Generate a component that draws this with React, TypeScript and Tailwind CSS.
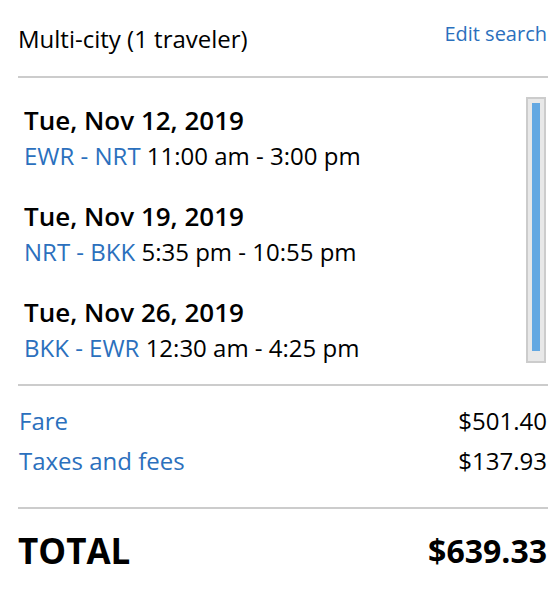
import React from "react";

const trips = [
  { date: "Tue, Nov 12, 2019", route: "EWR - NRT", time: "11:00 am - 3:00 pm" },
  { date: "Tue, Nov 19, 2019", route: "NRT - BKK", time: "5:35 pm - 10:55 pm" },
  { date: "Tue, Nov 26, 2019", route: "BKK - EWR", time: "12:30 am - 4:25 pm" },
];

export default function App() {
  return (
    <div
      className="w-[560px] h-[596px] bg-white text-black pl-[18px] pr-[12px]"
      style={{ fontFamily: '"Open Sans", "Liberation Sans", sans-serif' }}
    >
      <div className="flex justify-between items-start pt-[22px] h-[76px]">
        <div className="text-[24px] leading-[34px]">Multi-city (1 traveler)</div>
        <a className="text-[20px] leading-[28px] text-[#2b70bd] mt-[-2px] mr-[1px]">Edit search</a>
      </div>
      <div className="h-[2px] bg-[#cccccc]" />
      <div className="flex justify-between pt-[19px] h-[306px]">
        <div className="pl-[6px] flex flex-col gap-[24px] pt-[5px]">
          {trips.map((t) => (
            <div key={t.date} className="flex flex-col">
              <div className="text-[26px] font-semibold leading-[36px]">{t.date}</div>
              <div className="text-[24px] leading-[36px]">
                <span className="text-[#2b70bd]">{t.route}</span> {t.time}
              </div>
            </div>
          ))}
        </div>
        <div className="w-[20px] h-[266px] bg-[#e8e8e8] border-2 border-[#cccccc] flex justify-center pt-[4px] mr-[2px]">
          <div className="w-[8px] h-[248px] bg-[#63a8e2]" />
        </div>
      </div>
      <div className="h-[2px] bg-[#cccccc]" />
      <div className="flex flex-col pt-[15px] text-[24px] leading-[40px]">
        <div className="flex justify-between">
          <span className="text-[#2b70bd] ml-[1px]">Fare</span>
          <span className="mr-[1px]">$501.40</span>
        </div>
        <div className="flex justify-between">
          <span className="text-[#2b70bd] ml-[1px]">Taxes and fees</span>
          <span className="mr-[1px]">$137.93</span>
        </div>
      </div>
      <div className="h-[2px] bg-[#cccccc] mt-[26px]" />
      <div className="flex justify-between items-center pt-[20px] font-bold">
        <span className="text-[35px] leading-[44px]">TOTAL</span>
        <span className="text-[32px] leading-[40px] mr-[1px]">$639.33</span>
      </div>
    </div>
  );
}
